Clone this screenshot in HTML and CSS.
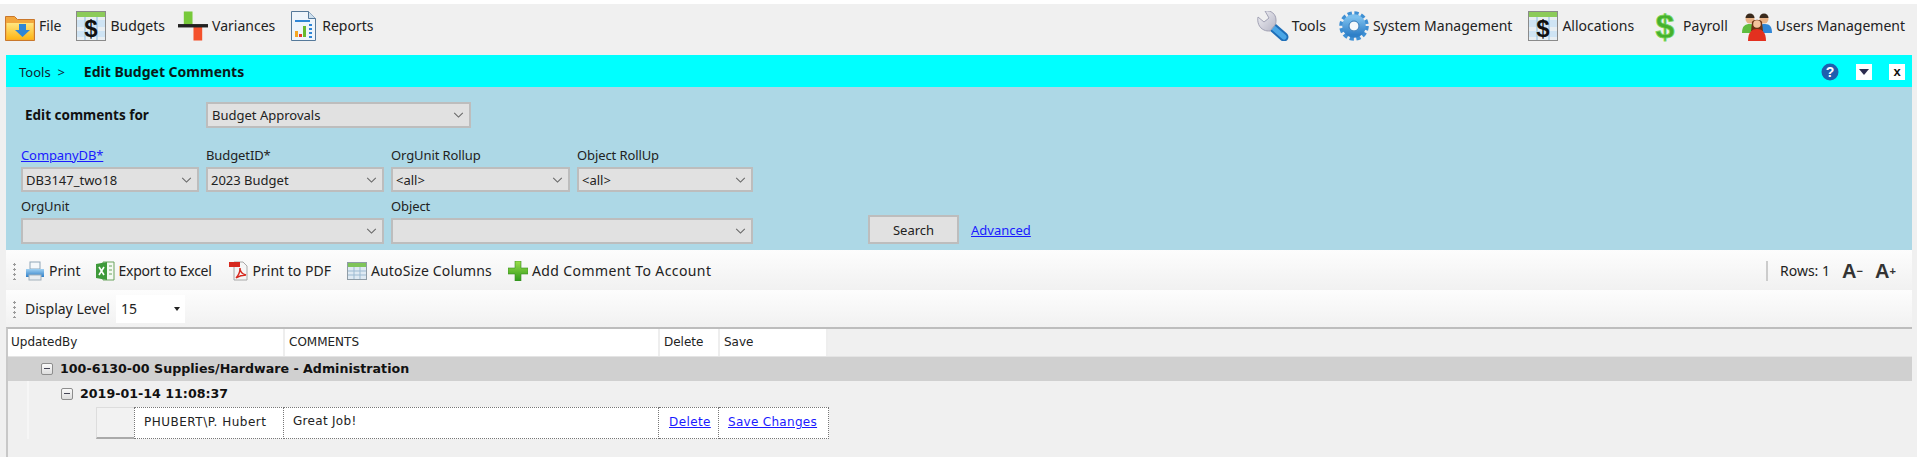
FILE: index.html
```html
<!DOCTYPE html>
<html lang="en">
<head>
<meta charset="utf-8">
<title>Edit Budget Comments</title>
<link rel="stylesheet" href="styles.css">
</head>
<body>
<svg class="defs" width="0" height="0" aria-hidden="true">
  <defs>
    <linearGradient id="fold" x1="0" y1="0" x2="0" y2="1"><stop offset="0" stop-color="#ffe680"/><stop offset="1" stop-color="#fdb515"/></linearGradient>
    <linearGradient id="blueg" x1="0" y1="0" x2="0" y2="1"><stop offset="0" stop-color="#9fd0f2"/><stop offset="1" stop-color="#2f7fc8"/></linearGradient>
    <linearGradient id="greeng" x1="0" y1="0" x2="0" y2="1"><stop offset="0" stop-color="#9ade4a"/><stop offset="1" stop-color="#2f9a1c"/></linearGradient>
    <linearGradient id="silver" x1="0" y1="0" x2="1" y2="1"><stop offset="0" stop-color="#f2f2f6"/><stop offset="1" stop-color="#b4b4c4"/></linearGradient>
    <linearGradient id="gearg" x1="0" y1="0" x2="0" y2="1"><stop offset="0" stop-color="#7cc0ee"/><stop offset="1" stop-color="#2f80c8"/></linearGradient>
    <symbol id="i-sheet" viewBox="0 0 30 30">
      <rect x=".5" y=".5" width="29" height="29" fill="#e8eef2" stroke="#8a8a8a"/>
      <rect x="1" y="1" width="28" height="5" fill="#8ccb5a"/>
      <rect x="1" y="9" width="28" height="7" fill="#cfe4f4"/><rect x="1" y="20" width="28" height="6" fill="#cfe4f4"/>
      <path d="M9 6v23M21 6v23" stroke="#a8cbe6" stroke-width="1.5"/>
      <text x="15" y="26" text-anchor="middle" class="dollar">$</text>
    </symbol>
  </defs>
</svg>

<header class="topbar">
  <nav class="menu">
    <a class="menu-item gap-file"><svg class="ic-file" viewBox="0 0 30 26"><path d="M.5 4V1.500h9l3 3h17v21H.5z" fill="#f2a63c" stroke="#c9772b"/><path d="M1.500 8h27v16.500h-27z" fill="url(#fold)"/><path d="M20 9h7v6h4l-7.500 7-7.500-7h4z" transform="translate(-6 0)" fill="#2f86d6"/></svg>File</a>
    <a class="menu-item gap-bud"><svg class="ic-30"><use href="#i-sheet"/></svg>Budgets</a>
    <a class="menu-item gap-var"><svg class="ic-30" viewBox="0 0 31 30"><rect x="6" y="0" width="9" height="14" fill="#77c93a"/><rect x="16" y="16" width="9" height="14" fill="#f4512c"/><rect x="0" y="13" width="31" height="3.500" fill="#222"/></svg>Variances</a>
    <a class="menu-item"><svg class="ic-rep" viewBox="0 0 25 30"><path d="M.5.5h17l7 7v22H.5z" fill="#eef5fb" stroke="#55799a"/><path d="M17.500.5v7h7" fill="#cfe0ee" stroke="#55799a"/><rect x="4" y="9" width="15" height="2" fill="#2f86d6"/><rect x="4" y="20" width="3" height="6" fill="#f5a623"/><rect x="8" y="23" width="3" height="3" fill="#e53b2e"/><rect x="12" y="15" width="3" height="11" fill="#68b92e"/><path d="M18 14h3M18 18h3M18 22h3M18 26h3" stroke="#2f86d6" stroke-width="2"/></svg>Reports</a>
  </nav>
  <nav class="menu">
    <a class="menu-item gap-tools"><svg class="ic-wrench" viewBox="0 0 32 30"><path d="M12 13l15 13" stroke="#1f6fb8" stroke-width="9" stroke-linecap="round"/><path d="M13 14l14 12" stroke="#4aa6e6" stroke-width="5" stroke-linecap="round"/><path d="M1 6l6 5 5-4-4-7c6-1 11 3 11 9 0 2 0 3-1 5l-5 6c-2 0-4 0-6-1C2 17 0 11 1 6z" fill="url(#silver)" stroke="#a2a2b4"/></svg>Tools</a>
    <a class="menu-item gap-sys"><svg class="ic-30" viewBox="0 0 30 30"><circle cx="15" cy="15" r="12.800" fill="none" stroke="#3f90d4" stroke-width="4" stroke-dasharray="4.200 2.500"/><circle cx="15" cy="15" r="8.500" fill="none" stroke="url(#gearg)" stroke-width="6.500"/><circle cx="15" cy="15" r="5" fill="#f4f8fb" stroke="#1f6fb5"/></svg>System Management</a>
    <a class="menu-item gap-alloc"><svg class="ic-30"><use href="#i-sheet"/></svg>Allocations</a>
    <a class="menu-item gap-pay"><svg class="ic-pay" viewBox="0 0 24 36"><text x="12" y="30" text-anchor="middle" class="dollar-big">$</text></svg>Payroll</a>
    <a class="menu-item"><svg class="ic-30" viewBox="0 0 30 30"><circle cx="8" cy="8" r="4.500" fill="#e8b184"/><path d="M3.500 7a4.500 4.500 0 0 1 9 0z" fill="#3a2a1c"/><circle cx="22" cy="8" r="4.500" fill="#e8b184"/><path d="M17.500 7a4.500 4.500 0 0 1 9 0z" fill="#3a2a1c"/><path d="M0 22c0-7 3-9 8-9s7 3 7 9z" fill="#5fbc3e"/><path d="M15 22c0-7 3-9 8-9s7 3 7 9z" fill="#2f86d6"/><path d="M9 20l1-9c1-3 9-3 10 0l1 9z" fill="#6b3313"/><circle cx="15" cy="13" r="3.800" fill="#f3c39c"/><path d="M6 30c0-9 4-12 9-12s9 3 9 12z" fill="#e3301f"/></svg>Users Management</a>
  </nav>
</header>

<main class="workspace">
  <div class="titlebar">
    <div class="crumbs"><span class="crumb">Tools &nbsp;&gt;</span><strong class="crumb-now">Edit Budget Comments</strong></div>
    <div class="win-tools">
      <svg class="ic-help" viewBox="0 0 18 18"><circle cx="9" cy="9" r="8.500" fill="#1f5fae"/><text x="9" y="14" text-anchor="middle" class="help-q">?</text></svg>
      <span class="win-btn"><i class="tri-down"></i></span>
      <span class="win-btn win-x">x</span>
    </div>
  </div>

  <section class="filters">
    <div class="edit-row">
      <strong class="edit-label">Edit comments for</strong>
      <div class="select select-wide">Budget Approvals<svg class="chev" viewBox="0 0 12 7"><path d="M1 1l5 5 5-5" fill="none" stroke="#666" stroke-width="1.200"/></svg></div>
    </div>
    <div class="filter-grid">
      <div class="field"><a class="link label">CompanyDB*</a><div class="select">DB3147_two18<svg class="chev" viewBox="0 0 12 7"><path d="M1 1l5 5 5-5" fill="none" stroke="#666" stroke-width="1.200"/></svg></div></div>
      <div class="field"><span class="label">BudgetID*</span><div class="select">2023 Budget<svg class="chev" viewBox="0 0 12 7"><path d="M1 1l5 5 5-5" fill="none" stroke="#666" stroke-width="1.200"/></svg></div></div>
      <div class="field"><span class="label">OrgUnit Rollup</span><div class="select">&lt;all&gt;<svg class="chev" viewBox="0 0 12 7"><path d="M1 1l5 5 5-5" fill="none" stroke="#666" stroke-width="1.200"/></svg></div></div>
      <div class="field"><span class="label">Object RollUp</span><div class="select">&lt;all&gt;<svg class="chev" viewBox="0 0 12 7"><path d="M1 1l5 5 5-5" fill="none" stroke="#666" stroke-width="1.200"/></svg></div></div>
      <div class="field span2"><span class="label">OrgUnit</span><div class="select select-tall"><svg class="chev" viewBox="0 0 12 7"><path d="M1 1l5 5 5-5" fill="none" stroke="#666" stroke-width="1.200"/></svg></div></div>
      <div class="field span2"><span class="label">Object</span><div class="select select-tall"><svg class="chev" viewBox="0 0 12 7"><path d="M1 1l5 5 5-5" fill="none" stroke="#666" stroke-width="1.200"/></svg></div></div>
      <div class="search-wrap"><button class="search-btn" type="button">Search</button><a class="link advanced">Advanced</a></div>
    </div>
  </section>

  <div class="toolbar toolbar-main">
    <div class="tools-left">
      <span class="grip"></span>
      <a class="tool t-print"><svg class="ic-20" viewBox="0 0 20 20"><rect x="5" y="1" width="10" height="7" fill="#f4f8fb" stroke="#8fa6b8"/><path d="M1 8h18v8H1z" fill="url(#blueg)"/><rect x="4" y="14" width="12" height="5" fill="#e8edf1" stroke="#a3b1bc"/></svg>Print</a>
      <a class="tool t-excel"><svg class="ic-20" viewBox="0 0 20 20"><path d="M8 1h11v18H8z" fill="#f4faf2" stroke="#6aa35e"/><path d="M1 3l11-2v18L1 17z" fill="#3e9a3a"/><path d="M4 6l5 8M9 6l-5 8" stroke="#fff" stroke-width="1.600"/><path d="M14 5h3M14 9h3M14 13h3" stroke="#6aa35e"/></svg>Export to Excel</a>
      <a class="tool t-pdf"><svg class="ic-20" viewBox="0 0 20 20"><path d="M5 1h9l4 4v14H5z" fill="#f5f5f5" stroke="#a8a8a8"/><rect x="0" y="1" width="11" height="5" fill="#d6291f"/><path d="M7 17c3-3 4-7 4-10 0 4 2 6 6 7-4 0-7 1-10 3z" fill="none" stroke="#d6291f" stroke-width="1.400"/></svg>Print to PDF</a>
      <a class="tool t-auto"><svg class="ic-20" viewBox="0 0 20 20"><rect x=".5" y="1.500" width="19" height="17" fill="#dfeaf3" stroke="#8f9ca6"/><rect x="1" y="2" width="18" height="4" fill="#7fc45a"/><path d="M7 6v12M13 6v12M1 10h18M1 14h18" stroke="#9dbbd2"/></svg>AutoSize Columns</a>
      <a class="tool t-add"><svg class="ic-20" viewBox="0 0 20 20"><path d="M7 0h6v7h7v6h-7v7H7v-7H0V7h7z" fill="url(#greeng)" stroke="#3b8f22" stroke-width=".6"/></svg>Add Comment To Account</a>
    </div>
    <div class="tools-right">
      <span class="sep"></span>
      <span class="rows">Rows: 1</span>
      <span class="font-btn">A<small>−</small></span>
      <span class="font-btn">A<small>+</small></span>
    </div>
  </div>

  <div class="toolbar toolbar-level">
    <span class="grip"></span>
    <span class="level-label">Display Level</span>
    <div class="level-combo">15<i class="tri-small"></i></div>
  </div>

  <div class="grid">
    <div class="grid-head">
      <div class="hc c-user">UpdatedBy</div>
      <div class="hc c-comment">COMMENTS</div>
      <div class="hc c-del">Delete</div>
      <div class="hc c-save">Save</div>
    </div>
    <div class="group-row"><span class="expander"></span>100-6130-00 Supplies/Hardware - Administration</div>
    <div class="sub-area">
      <div class="subgroup-row"><span class="expander"></span>2019-01-14 11:08:37</div>
      <div class="data-row">
        <div class="row-head"></div>
        <div class="dc dc-user">PHUBERT\P. Hubert</div>
        <div class="dc dc-comment">Great Job!</div>
        <div class="dc dc-del"><a class="link">Delete</a></div>
        <div class="dc dc-save"><a class="link">Save Changes</a></div>
      </div>
    </div>
  </div>
</main>
</body>
</html>
```
FILE: styles.css
```css
* { box-sizing: border-box; }
html, body { margin: 0; height: 100%; }
body {
  background: #f0f0f0;
  color: #222;
  font: 14px/18px "Noto Sans", "Open Sans", sans-serif;
  overflow: hidden;
}
.defs { position: absolute; }
svg { display: block; flex: none; }
.dollar { font: bold 24px "Liberation Sans", sans-serif; fill: #111; }
.dollar-big { font: bold 34px "Liberation Sans", sans-serif; fill: #45b02e; stroke: #7ad65a; stroke-width: .8px; }
.help-q { font: bold 14px "Liberation Sans", sans-serif; fill: #fff; }

.topbar {
  height: 55px;
  border-top: 4px solid #fff;
  display: flex;
  justify-content: space-between;
  padding: 7px 12px 0 5px;
}
.menu { display: flex; align-items: flex-start; }
.menu-item { display: flex; align-items: center; height: 30px; color: #222; white-space: nowrap; }
.ic-file { width: 30px; height: 26px; margin-right: 4px; margin-top: 3px; }
.ic-30 { width: 30px; height: 30px; margin-right: 4px; }
.ic-wrench { width: 32px; height: 30px; margin-right: 3px; }
.ic-rep { width: 25px; height: 30px; margin-right: 6px; }
.ic-pay { width: 24px; height: 36px; margin: -3px 6px -3px 0; }
.gap-file { margin-right: 15px; }
.gap-bud { margin-right: 13px; }
.gap-var { margin-right: 16px; }
.gap-tools { margin-right: 13px; }
.gap-sys { margin-right: 16px; }
.gap-alloc { margin-right: 19px; }
.gap-pay { margin-right: 14px; }

.workspace { margin: 0 5px 0 6px; }
.titlebar {
  height: 32px;
  background: #00ffff;
  display: flex;
  justify-content: space-between;
  align-items: center;
  padding: 1px 7px 0 13px;
  font-size: 13px;
  color: #123;
}
.crumbs { display: flex; align-items: center; gap: 19px; }
.crumb-now { color: #0a1a1a; font-size: 14px; }
.win-tools { display: flex; align-items: center; }
.ic-help { width: 18px; height: 18px; margin-right: 17px; }
.win-btn {
  width: 16px; height: 16px;
  background: #fff;
  display: flex; align-items: center; justify-content: center;
  font: bold 13px/16px "Liberation Sans", sans-serif;
  color: #111;
}
.win-x { margin-left: 17px; }
.tri-down { border: 5px solid transparent; border-top: 6px solid #2c2c50; border-bottom: 0; }

.filters { height: 163px; background: #add8e6; padding: 15px 0 0 15px; font-size: 13px; }
.edit-row { display: flex; align-items: center; height: 26px; }
.edit-label { width: 185px; padding-left: 4px; font-size: 13.500px; color: #111; }
.select {
  position: relative;
  height: 25px;
  background: #e1e1e1;
  border: 2px solid #bdbdbd;
  padding-left: 3px;
  display: flex;
  align-items: center;
  font-size: 13px;
  color: #222;
}
.select-wide { width: 265px; height: 26px; padding-left: 4px; }
.select-tall { height: 26px; }
.chev { position: absolute; right: 5px; top: 50%; margin-top: -3px; width: 11px; height: 6px; }

.filter-grid {
  display: grid;
  grid-template-columns: 178px 178px 179px 176px 1fr;
  column-gap: 7px;
  margin-top: 17px;
}
.field { display: flex; flex-direction: column; margin-bottom: 4px; }
.span2 { grid-column: span 2; }
.label { height: 22px; line-height: 20px; font-size: 13px; color: #222; white-space: nowrap; letter-spacing: -.1px; }
.link { color: #1a1aff; text-decoration: underline; }
.search-wrap { display: flex; align-items: center; align-self: start; gap: 12px; padding: 19px 0 0 108px; }
.search-btn {
  width: 91px; height: 29px;
  background: #e1e1e1;
  border: 2px solid #bdbdbd;
  font: 13px "Noto Sans", sans-serif;
  color: #222;
  padding: 0;
}
.advanced { font-size: 13px; }

.toolbar { display: flex; align-items: center; background: linear-gradient(#fdfdfd, #f1f1f1); }
.toolbar-main { height: 40px; justify-content: space-between; padding: 1px 16px 0 0; }
.toolbar-level { height: 37px; }
.tools-left, .tools-right { display: flex; align-items: center; }
.grip { width: 3px; height: 18px; margin: 0 9px 0 7px; flex: none; background: radial-gradient(circle, #9a9a9a 1.200px, transparent 1.400px) 0 0 / 3px 5px; }
.tool { display: flex; align-items: center; gap: 4px; color: #222; font-size: 14px; white-space: nowrap; }
.ic-20 { width: 20px; height: 20px; }
.t-print { margin-right: 14px; }
.t-excel { margin-right: 17px; letter-spacing: -.27px; }
.t-pdf { margin-right: 16px; }
.t-auto { margin-right: 16px; letter-spacing: .15px; }
.t-add { letter-spacing: .4px; }
.sep { width: 2px; height: 20px; background: #ccc; margin-right: 12px; }
.rows { margin-right: 12px; font-size: 14px; }
.font-btn { font: bold 20px/20px "Liberation Sans", sans-serif; color: #333; width: 21px; display: flex; align-items: center; }
.font-btn + .font-btn { margin-left: 12px; }
.font-btn small { font-size: 11px; font-weight: bold; }
.level-label { font-size: 14px; margin-right: 6px; }
.level-combo {
  position: relative;
  width: 69px; height: 28px;
  background: #fff;
  padding-left: 5px;
  line-height: 28px;
  font-size: 14px;
}
.tri-small { position: absolute; right: 5px; top: 12px; border: 3.500px solid transparent; border-top: 4px solid #222; border-bottom: 0; }

.grid {
  border-top: 2px solid #bdbdbd;
  border-left: 2px solid #c8c8c8;
  height: 132px;
  font: 12px/16px "DejaVu Sans", sans-serif;
  color: #222;
}
.grid-head { display: flex; height: 27px; background: #f0f0f0; }
.hc { background: #fff; border-right: 2px solid #eee; padding: 5px 0 0 4px; height: 27px; white-space: nowrap; }
.c-user { width: 277px; padding-left: 3px; }
.c-comment { width: 375px; }
.c-del { width: 60px; }
.c-save { width: 108px; }
.group-row, .subgroup-row { display: flex; align-items: center; font-weight: bold; color: #111; font-size: 12.650px; }
.group-row { height: 25px; background: #d0d0d0; padding-left: 33px; border-top: 1px solid #e4e4e4; }
.sub-area { margin-left: 19px; border-left: 2px solid #f6f6f6; }
.subgroup-row { height: 26px; padding-left: 32px; }
.expander {
  position: relative;
  width: 12px; height: 12px;
  margin-right: 7px;
  border: 1px solid #8d8d8d;
  border-radius: 2px;
  background: linear-gradient(#fafafa, #ddd);
}
.expander::after { content: ""; position: absolute; left: 2px; right: 2px; top: 4px; height: 1px; background: #445; }
.data-row { display: flex; height: 32px; margin-left: 67px; }
.row-head { width: 38px; background: #f2f2f2; border-bottom: 2px solid #aaa; border-top: 1px solid #ddd; border-left: 1px solid #ddd; }
.dc {
  background: #fff;
  border: 1px dotted #777;
  border-left-width: 0;
  padding-top: 6px;
  white-space: nowrap;
}
.dc-user { width: 150px; padding-left: 9px; border-left-width: 1px; letter-spacing: .5px; }
.dc-comment { width: 375px; padding-left: 9px; padding-top: 5px; letter-spacing: .3px; }
.dc-del { width: 60px; padding-left: 10px; letter-spacing: .4px; }
.dc-save { width: 110px; padding-left: 9px; letter-spacing: .3px; }
```
